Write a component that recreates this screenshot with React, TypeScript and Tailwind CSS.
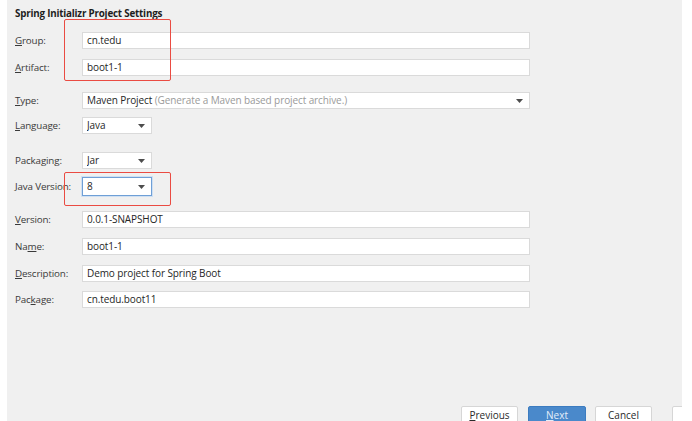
import React from "react";

const font = { fontFamily: '"Open Sans", "Noto Sans", "Liberation Sans", sans-serif' };

function Label({ pre, u, post }: { pre: string; u: string; post: string }) {
  return (
    <div className="w-[67px] shrink-0 text-[9.8px] leading-[12px] text-[#3a3a3a] tracking-[-0.15px] whitespace-nowrap">
      {pre}
      <span className="underline underline-offset-1">{u}</span>
      {post}
    </div>
  );
}

function TextBox({ value, w = "w-[448px]" }: { value: string; w?: string }) {
  return (
    <div
      className={`${w} h-full bg-white border border-[#dadada] flex items-center pl-[4px] text-[10px] text-[#262626] tracking-[-0.1px]`}
    >
      {value}
    </div>
  );
}

function Arrow() {
  return (
    <svg width="7" height="4" viewBox="0 0 7 4" className="shrink-0">
      <path d="M0 0 L7 0 L3.5 4 Z" fill="#4d4d4d" />
    </svg>
  );
}

function Select({
  children,
  w,
  focused,
}: {
  children: React.ReactNode;
  w: string;
  focused?: boolean;
}) {
  return (
    <div
      className={`${w} h-full bg-white border ${
        focused ? "border-[#6f9fd6] shadow-[0_0_0_1px_#cfe0f3]" : "border-[#dadada]"
      } flex items-center pl-[4px] pr-[6px] text-[10px] text-[#262626] tracking-[-0.1px]`}
    >
      <div className="flex-1 truncate">{children}</div>
      <Arrow />
    </div>
  );
}

const row = "shrink-0 flex items-center";

export default function App() {
  return (
    <div className="relative w-[692px] h-[421px] bg-white flex overflow-hidden" style={font}>
      <div className="w-[7px] shrink-0" />
      <div className="w-[675px] shrink-0 h-full bg-[#f0f0f0] flex flex-col pl-[8px] pt-[8px] overflow-hidden">
        <div className="shrink-0 h-[12px] text-[9.8px] leading-[12px] font-bold text-[#1e1e1e] tracking-[-0.2px]">
          Spring Initializr Project Settings
        </div>

        <div className={`${row} mt-[12px] h-[17px]`}>
          <Label pre="" u="G" post="roup:" />
          <TextBox value="cn.tedu" />
        </div>
        <div className={`${row} mt-[10px] h-[17px]`}>
          <Label pre="" u="A" post="rtifact:" />
          <TextBox value="boot1-1" />
        </div>
        <div className={`${row} mt-[16px] h-[17px]`}>
          <Label pre="" u="T" post="ype:" />
          <Select w="w-[448px]">
            Maven Project <span className="text-[#9a9a9a]">(Generate a Maven based project archive.)</span>
          </Select>
        </div>
        <div className={`${row} mt-[8px] h-[17px]`}>
          <Label pre="" u="L" post="anguage:" />
          <Select w="w-[70px]">Java</Select>
        </div>
        <div className={`${row} mt-[18px] h-[17px]`}>
          <Label pre="Packa" u="g" post="ing:" />
          <Select w="w-[70px]">Jar</Select>
        </div>
        <div className={`${row} mt-[8px] h-[19px]`}>
          <Label pre="" u="J" post="ava Version:" />
          <Select w="w-[70px]" focused>
            8
          </Select>
        </div>
        <div className={`${row} mt-[15px] h-[17px]`}>
          <Label pre="" u="V" post="ersion:" />
          <TextBox value="0.0.1-SNAPSHOT" />
        </div>
        <div className={`${row} mt-[10px] h-[17px]`}>
          <Label pre="Na" u="m" post="e:" />
          <TextBox value="boot1-1" />
        </div>
        <div className={`${row} mt-[10px] h-[17px]`}>
          <Label pre="" u="D" post="escription:" />
          <TextBox value="Demo project for Spring Boot" />
        </div>
        <div className={`${row} mt-[9px] h-[17px]`}>
          <Label pre="Pac" u="k" post="age:" />
          <TextBox value="cn.tedu.boot11" />
        </div>

        <div className="mt-[98px] h-[17px] flex items-stretch pl-[446px] gap-[10px] shrink-0">
          <div className="w-[57px] shrink-0 bg-white border border-[#d6d6d6] rounded-[2px] flex items-center justify-center text-[10px] leading-[12px] text-[#2a2a2a]">
            <span>
              <span className="underline">P</span>revious
            </span>
          </div>
          <div className="w-[58px] shrink-0 bg-[#4a89cb] border border-[#3c7cc0] rounded-[2px] flex items-center justify-center text-[10px] leading-[12px] text-[#e4eefa]">
            <span>
              <span className="underline">N</span>ext
            </span>
          </div>
          <div className="w-[57px] shrink-0 bg-white border border-[#d6d6d6] rounded-[2px] flex items-center justify-center text-[10px] leading-[12px] text-[#2a2a2a] -ml-[1px]">
            Cancel
          </div>
          <div className="w-[57px] shrink-0 bg-white border border-[#d6d6d6] rounded-[2px] flex items-center pl-[9px] ml-[10px]">
            <span className="w-[1px] h-[7px] bg-[#f5cf95]" />
          </div>
        </div>
      </div>
      <div className="flex-1 bg-white" />

      <div className="absolute left-[64px] top-[19px] w-[107px] h-[62px] border-[1.5px] border-[#ea4b42] rounded-[2px] pointer-events-none" />
      <div className="absolute left-[64px] top-[172px] w-[107px] h-[34px] border-[1.5px] border-[#ea4b42] rounded-[2px] pointer-events-none" />
    </div>
  );
}
